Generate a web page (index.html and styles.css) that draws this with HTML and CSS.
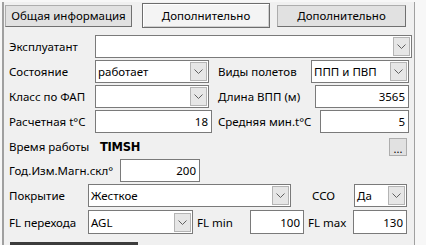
FILE: index.html
```html
<!DOCTYPE html>
<html>
<head>
<meta charset="utf-8">
<link rel="stylesheet" href="styles.css">
</head>
<body>
<div class="frame">
  <div class="tabs">
    <div class="tab t1">Общая информация</div>
    <div class="tab t2 active">Дополнительно</div>
    <div class="tab t3">Дополнительно</div>
  </div>
  <div class="form">
    <div class="row">
      <span class="lbl w86">Эксплуатант</span>
      <div class="combo w317"><span class="val"></span><span class="btn"><svg viewBox="0 0 9 5" width="9" height="5"><path d="M0.5 0.5 L4.5 4.5 L8.5 0.5" fill="none" stroke="#606060" stroke-width="1"/></svg></span></div>
    </div>
    <div class="row">
      <span class="lbl w86">Состояние</span>
      <div class="combo w114"><span class="val">работает</span><span class="btn"><svg viewBox="0 0 9 5" width="9" height="5"><path d="M0.5 0.5 L4.5 4.5 L8.5 0.5" fill="none" stroke="#606060" stroke-width="1"/></svg></span></div>
      <span class="lbl ml9 w93">Виды полетов</span>
      <div class="combo w98"><span class="val">ППП и ПВП</span><span class="btn"><svg viewBox="0 0 9 5" width="9" height="5"><path d="M0.5 0.5 L4.5 4.5 L8.5 0.5" fill="none" stroke="#606060" stroke-width="1"/></svg></span></div>
    </div>
    <div class="row">
      <span class="lbl w86">Класс по ФАП</span>
      <div class="combo w114"><span class="val"></span><span class="btn"><svg viewBox="0 0 9 5" width="9" height="5"><path d="M0.5 0.5 L4.5 4.5 L8.5 0.5" fill="none" stroke="#606060" stroke-width="1"/></svg></span></div>
      <span class="lbl ml9 w97">Длина ВПП (м)</span>
      <div class="input w94">3565</div>
    </div>
    <div class="row">
      <span class="lbl w86">Расчетная t°C</span>
      <div class="input w117">18</div>
      <span class="lbl ml6 w102">Средняя мин.t°C</span>
      <div class="input w89">5</div>
    </div>
    <div class="row time">
      <span class="lbl w91">Время работы</span>
      <span class="bold">TIMSH</span>
      <span class="dots">...</span>
    </div>
    <div class="row">
      <span class="lbl w111">Год.Изм.Магн.скл°</span>
      <div class="input w80">200</div>
    </div>
    <div class="row">
      <span class="lbl w79">Покрытие</span>
      <div class="combo w203"><span class="val">Жесткое</span><span class="btn"><svg viewBox="0 0 9 5" width="9" height="5"><path d="M0.5 0.5 L4.5 4.5 L8.5 0.5" fill="none" stroke="#606060" stroke-width="1"/></svg></span></div>
      <span class="lbl ml21 w42">ССО</span>
      <div class="combo w53"><span class="val">Да</span><span class="btn"><svg viewBox="0 0 9 5" width="9" height="5"><path d="M0.5 0.5 L4.5 4.5 L8.5 0.5" fill="none" stroke="#606060" stroke-width="1"/></svg></span></div>
    </div>
    <div class="row last">
      <span class="lbl w79">FL перехода</span>
      <div class="combo w105"><span class="val">AGL</span><span class="btn"><svg viewBox="0 0 9 5" width="9" height="5"><path d="M0.5 0.5 L4.5 4.5 L8.5 0.5" fill="none" stroke="#606060" stroke-width="1"/></svg></span></div>
      <span class="lbl ml4 w53">FL min</span>
      <div class="input w54">100</div>
      <span class="lbl ml4 w45">FL max</span>
      <div class="input w54">130</div>
    </div>
  </div>
  <div class="bottom">
    <div class="bar"></div>
  </div>
</div>
</body>
</html>
```

FILE: styles.css
```css
html, body {
  margin: 0;
  padding: 0;
  background: #f7f7f7;
}
body {
  font-family: "Noto Sans", "DejaVu Sans", sans-serif;
  font-size: 11.5px;
  color: #000;
  width: 426px;
  height: 245px;
  overflow: hidden;
}
.frame {
  margin-top: 2px;
  margin-left: 2px;
  width: 413px;
  height: 243px;
  background: #f0f0f0;
  border-left: 2px solid #a0a0a0;
  border-right: 1px solid #a0a0a0;
  box-sizing: border-box;
  position: relative;
}
.tabs {
  display: flex;
  align-items: center;
  height: 27px;
  padding-left: 1px;
}
.tab {
  height: 22px;
  box-sizing: border-box;
  background: #e1e1e1;
  border: 1px solid #adadad;
  border-right-color: #707070;
  border-bottom-color: #707070;
  display: flex;
  align-items: center;
  justify-content: center;
  line-height: 1;
}
.t1 { width: 127px; }
.t2 { width: 128px; margin-left: 10px; height: 25px; background: #f4f4f4; border: 1px solid #6d6d6d; box-shadow: inset 1px 1px 0 #fff, inset -1px -1px 0 #cfcfcf; }
.t3 { width: 129px; margin-left: 7px; }
.form {
  padding-left: 5px;
  padding-top: 6px;
  display: flex;
  flex-direction: column;
  gap: 2px;
}
.row {
  display: flex;
  align-items: center;
  height: 23px;
}
.row.last {
  margin-top: 1px;
  height: 24px;
}
.lbl {
  flex: none;
  white-space: nowrap;
}
.combo, .input {
  flex: none;
  height: 100%;
  box-sizing: border-box;
  background: #fff;
  border: 1px solid #7a7a7a;
  display: flex;
  align-items: center;
}
.combo .val {
  flex: 1;
  padding-left: 2px;
  white-space: nowrap;
}
.combo .btn {
  width: 17px;
  height: 19px;
  margin-right: 1px;
  box-sizing: border-box;
  background: #e6e6e6;
  border: 1px solid #b4b4b4;
  display: flex;
  align-items: center;
  justify-content: center;
}
.input {
  justify-content: flex-end;
  padding-right: 3px;
}
.time {
  height: 23px;
  margin-bottom: -1px;
}
.bold {
  font-weight: bold;
  font-family: "DejaVu Sans", sans-serif;
  font-size: 11.5px;
  letter-spacing: -0.3px;
}
.dots {
  margin-left: auto;
  margin-right: 7px;
  width: 18px;
  height: 18px;
  box-sizing: border-box;
  background: #e1e1e1;
  border: 1px solid #adadad;
  display: flex;
  align-items: flex-end;
  justify-content: center;
  line-height: 12px;
  font-size: 11px;
}
.bottom {
  position: absolute;
  left: 6px;
  bottom: 0;
}
.bar {
  width: 128px;
  height: 3px;
  background: #3c3c3c;
}
.w42 { width: 42px; } .w45 { width: 45px; } .w53 { width: 53px; } .w54 { width: 54px; }
.w79 { width: 79px; } .w80 { width: 80px; } .w86 { width: 86px; } .w89 { width: 89px; }
.w91 { width: 91px; } .w93 { width: 93px; } .w94 { width: 94px; } .w97 { width: 97px; }
.w98 { width: 98px; } .w102 { width: 102px; } .w105 { width: 105px; } .w111 { width: 111px; }
.w114 { width: 114px; } .w117 { width: 117px; } .w203 { width: 203px; } .w317 { width: 317px; }
.ml4 { margin-left: 4px; } .ml6 { margin-left: 6px; } .ml9 { margin-left: 9px; } .ml21 { margin-left: 21px; }
```
